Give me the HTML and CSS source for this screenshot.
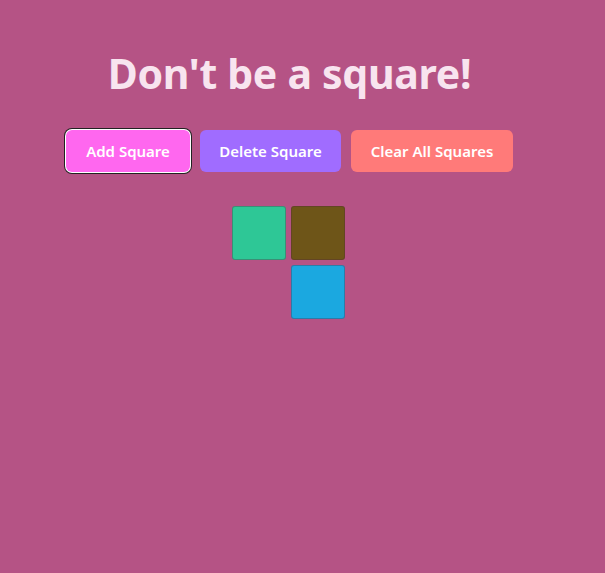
FILE: index.html
```html
<!DOCTYPE html>
<html>
<head>
<meta charset="utf-8">
<link rel="stylesheet" href="styles.css">
</head>
<body>
<main class="app">
  <h1 class="title">Don't be a square!</h1>
  <div class="controls">
    <button class="btn btn-add">Add Square</button>
    <button class="btn btn-delete">Delete Square</button>
    <button class="btn btn-clear">Clear All Squares</button>
  </div>
  <div class="squares">
    <div class="square" style="background:#6e5518"></div>
    <div class="square" style="background:#2ec796"></div>
    <div class="square" style="background:#1ba8e0"></div>
  </div>
</main>
</body>
</html>
```
FILE: styles.css
```css
html, body {
  margin: 0;
  padding: 0;
  background: #b55385;
  min-height: 100%;
}
body {
  font-family: "Noto Sans", "Open Sans", sans-serif;
}
.app {
  width: 579px;
  display: flex;
  flex-direction: column;
  align-items: center;
}
.title {
  margin: 45px 0 0 0;
  font-size: 41px;
  font-weight: 700;
  line-height: 56px;
  color: #f8e4ef;
  letter-spacing: -0.3px;
}
.controls {
  display: flex;
  gap: 10px;
  margin-top: 29px;
}
.btn {
  height: 42px;
  border: none;
  border-radius: 6px;
  color: #ffffff;
  font-family: "Noto Sans", "Open Sans", sans-serif;
  font-size: 15px;
  font-weight: 600;
  padding: 0 18px;
}
.btn-add {
  background: #ff67ef;
  width: 124px;
  box-shadow: 0 0 0 1px #ffffff, 0 0 0 2px #222222;
}
.btn-delete {
  background: #a06cff;
  width: 141px;
}
.btn-clear {
  background: #ff7a79;
  width: 162px;
}
.squares {
  width: 113px;
  margin-top: 34px;
  margin-right: 2px;
  display: flex;
  flex-direction: row-reverse;
  flex-wrap: wrap;
  gap: 5px;
}
.square {
  width: 52px;
  height: 52px;
  border: 1px solid rgba(80, 40, 60, 0.35);
  border-radius: 3px;
}
```
